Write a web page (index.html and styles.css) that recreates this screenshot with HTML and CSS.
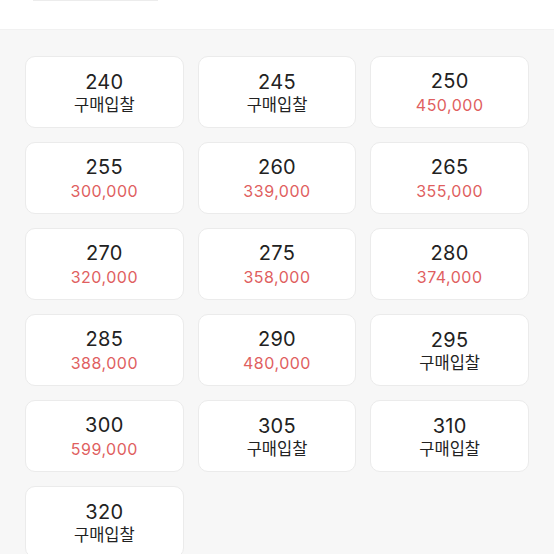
FILE: index.html
```html
<!DOCTYPE html>
<html lang="ko">
<head>
<meta charset="utf-8">
<link rel="stylesheet" href="styles.css">
</head>
<body>
<header class="top">
  <div class="tab-edge"></div>
</header>
<main class="sizes">
  <div class="card"><div class="size">240</div><div class="label">구매입찰</div></div>
  <div class="card"><div class="size">245</div><div class="label">구매입찰</div></div>
  <div class="card"><div class="size">250</div><div class="price">450,000</div></div>
  <div class="card"><div class="size">255</div><div class="price">300,000</div></div>
  <div class="card"><div class="size">260</div><div class="price">339,000</div></div>
  <div class="card"><div class="size">265</div><div class="price">355,000</div></div>
  <div class="card"><div class="size">270</div><div class="price">320,000</div></div>
  <div class="card"><div class="size">275</div><div class="price">358,000</div></div>
  <div class="card"><div class="size">280</div><div class="price">374,000</div></div>
  <div class="card"><div class="size">285</div><div class="price">388,000</div></div>
  <div class="card"><div class="size">290</div><div class="price">480,000</div></div>
  <div class="card"><div class="size">295</div><div class="label">구매입찰</div></div>
  <div class="card"><div class="size">300</div><div class="price">599,000</div></div>
  <div class="card"><div class="size">305</div><div class="label">구매입찰</div></div>
  <div class="card"><div class="size">310</div><div class="label">구매입찰</div></div>
  <div class="card"><div class="size">320</div><div class="label">구매입찰</div></div>
</main>
</body>
</html>
```
FILE: styles.css
```css
html, body {
  margin: 0;
  padding: 0;
  background: #f7f7f7;
}
body {
  font-family: Inter, "Noto Sans", "Noto Sans CJK KR", sans-serif;
  color: #222;
  overflow: hidden;
  height: 554px;
}
.top {
  background: #fff;
  height: 29px;
  border-bottom: 1px solid #f1f1f1;
  padding-left: 33px;
}
.tab-edge {
  width: 125px;
  height: 1px;
  background: #ececec;
}
.sizes {
  display: grid;
  grid-template-columns: repeat(3, 1fr);
  column-gap: 14px;
  row-gap: 14px;
  padding: 26px 25px 0;
}
.card {
  box-sizing: border-box;
  height: 72px;
  background: #fff;
  border: 1px solid #ebebeb;
  border-radius: 10px;
  display: flex;
  flex-direction: column;
  align-items: center;
  justify-content: center;
  padding-top: 1px;
}
.size {
  font-size: 20px;
  line-height: 22px;
  color: #222;
  letter-spacing: 0.3px;
}
.label {
  font-family: "Noto Sans CJK KR", sans-serif;
  font-size: 16.5px;
  line-height: 22px;
  color: #222;
}
.price {
  font-size: 16px;
  line-height: 22px;
  color: #e05f5f;
  letter-spacing: 0.5px;
  padding-top: 2px;
}
```
